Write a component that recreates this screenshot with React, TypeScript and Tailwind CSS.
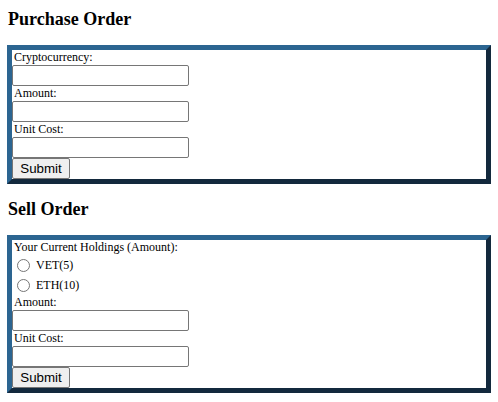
import React, { FC } from 'react';

const serif = { fontFamily: '"Liberation Serif", "Times New Roman", serif' };

const Field: FC<{ label: string }> = ({ label }) => (
  <>
    <div className="pl-[2px] text-[12px] leading-[15px] text-black">{label}</div>
    <div className="h-[21px] w-[177px] rounded-[2px] border border-[#767676] bg-white" />
  </>
);

const SubmitButton: FC = () => (
  <div
    className="flex h-[21px] w-[58px] items-center justify-center rounded-[2px] border border-[#767676] bg-[#efefef] text-[13.33px] text-black"
    style={{ fontFamily: '"Liberation Sans", Arial, sans-serif' }}
  >
    Submit
  </div>
);

const Box: FC<{ children: React.ReactNode }> = ({ children }) => (
  <div className="mx-[7px] flex flex-col border-[5px] border-t-[#2c6591] border-l-[#2c6591] border-r-[#13293d] border-b-[#13293d] bg-white">
    {children}
  </div>
);

const Radio: FC<{ label: string }> = ({ label }) => (
  <div className="flex h-[20px] items-center">
    <span className="ml-[5px] h-[13px] w-[13px] rounded-full border border-[#767676] bg-white" />
    <span className="ml-[6px] text-[12px] leading-[15px] text-black">{label}</span>
  </div>
);

const App: FC = () => {
  return (
    <div className="min-h-screen w-full bg-white pt-[9px]" style={serif}>
      <h3 className="mb-[15px] ml-[8px] text-[18px] font-bold leading-[21px] text-black">Purchase Order</h3>
      <Box>
        <Field label="Cryptocurrency:" />
        <Field label="Amount:" />
        <Field label="Unit Cost:" />
        <SubmitButton />
      </Box>
      <h3 className="mt-[15px] mb-[15px] ml-[8px] text-[18px] font-bold leading-[21px] text-black">Sell Order</h3>
      <Box>
        <div className="pl-[2px] text-[12px] leading-[15px] text-black">Your Current Holdings (Amount):</div>
        <Radio label="VET(5)" />
        <Radio label="ETH(10)" />
        <Field label="Amount:" />
        <Field label="Unit Cost:" />
        <SubmitButton />
      </Box>
    </div>
  );
};

export default App;
